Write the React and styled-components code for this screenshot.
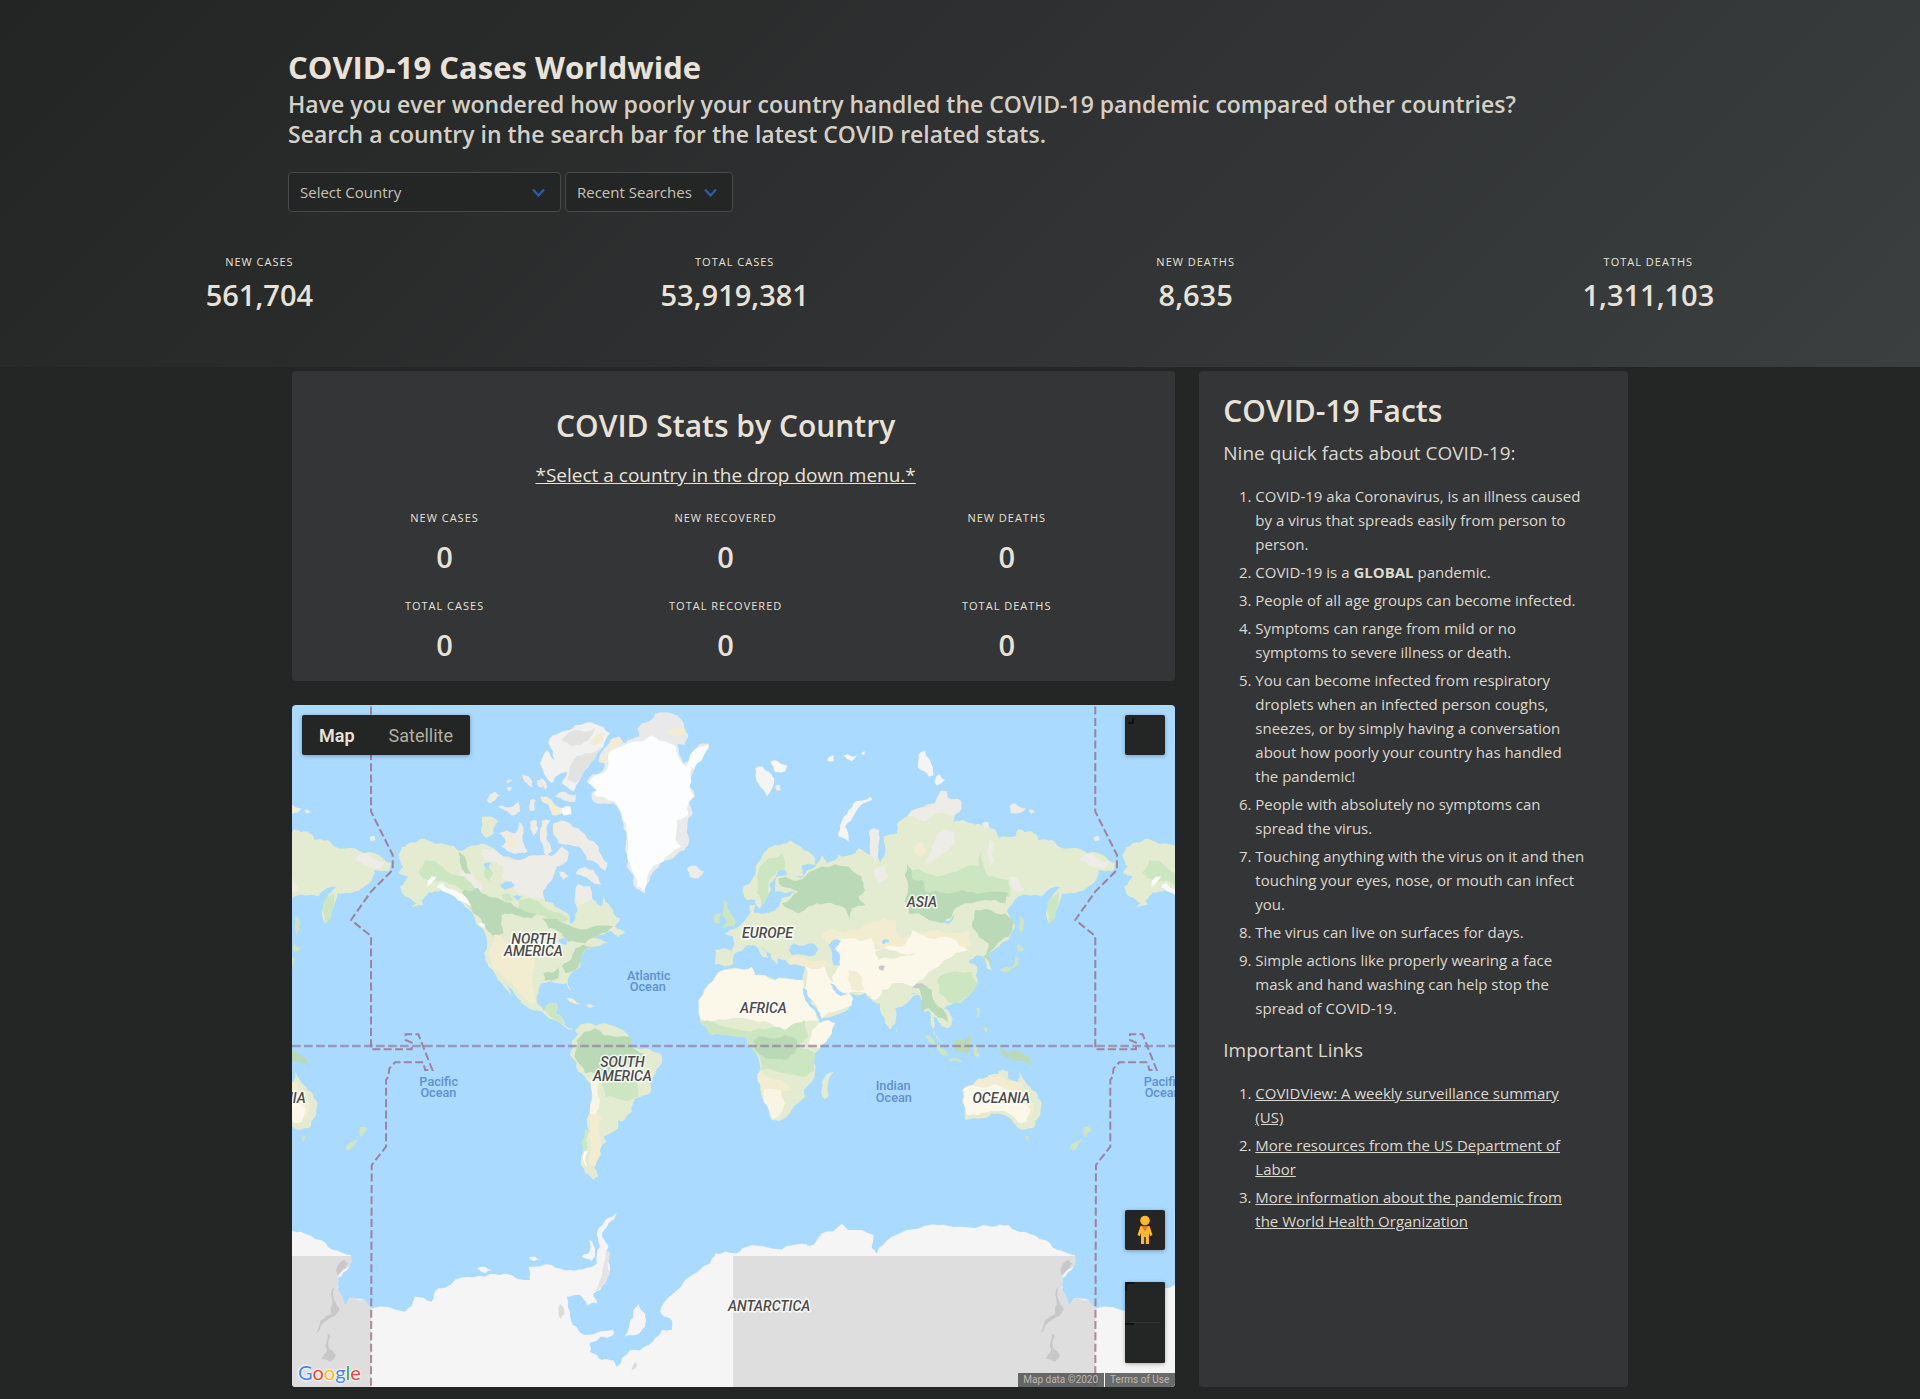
import React from "react";
import styled, { createGlobalStyle } from "styled-components";

const color = {
  page: "#232625",
  panel: "#343537",
  heading: "#e8e2d8",
  text: "#ddd8ce",
  muted: "#b6ada0",
  border: "#47494a",
  accent: "#2f5ba5",
  water: "#aadaff",
};

const GlobalStyle = createGlobalStyle`
  *, *::before, *::after { box-sizing: border-box; }
  body {
    margin: 0;
    background: ${color.page};
    color: ${color.heading};
    font-family: "Open Sans", "Noto Sans", sans-serif;
    font-size: 15px;
    line-height: 24px;
  }
  h1, h2, h3, p, ol, dl, dd { margin: 0; padding: 0; }
`;

const Page = styled.div`
  display: flex;
  flex-direction: column;
  min-height: 100vh;
`;

/* ---------- header ---------- */

const Header = styled.header`
  padding: 47px 0 53px;
  background: linear-gradient(135deg, #232524 0%, #303233 55%, #3b3f40 100%);
`;

const Intro = styled.div`
  width: 70%;
  margin: 0 auto;
`;

const PageTitle = styled.h1`
  font-size: 31px;
  font-weight: 700;
  line-height: 40px;
`;

const Lead = styled.p`
  margin-top: 2px;
  color: #d5d0c5;
  font-size: 23px;
  font-weight: 600;
  line-height: 30px;
`;

const Filters = styled.form`
  display: flex;
  gap: 4px;
  margin-top: 23px;
`;

const SelectBox = styled.div`
  position: relative;
  width: ${(p) => p.$width}px;
`;

const Select = styled.select`
  width: 100%;
  height: 40px;
  padding: 0 36px 0 11px;
  appearance: none;
  border: 1px solid ${color.border};
  border-radius: 4px;
  background: ${color.page};
  color: #c9c2b6;
  font: inherit;
`;

const Chevron = styled.svg`
  position: absolute;
  top: 14px;
  right: 16px;
  width: 13px;
  height: 13px;
  fill: none;
  stroke: ${color.accent};
  stroke-width: 2.4;
  pointer-events: none;
`;

const WorldStats = styled.dl`
  display: flex;
  justify-content: space-around;
  margin-top: 38px;
  padding: 0 32px;
`;

const StatBox = styled.div`
  display: flex;
  flex-direction: column;
  gap: ${(p) => (p.$spaced ? 8 : 2)}px;
  text-align: center;
`;

const StatLabel = styled.dt`
  font-size: 11px;
  line-height: 24px;
  letter-spacing: 1px;
  text-transform: uppercase;
`;

const StatValue = styled.dd`
  font-size: 29px;
  font-weight: 600;
  line-height: 38px;
`;

/* ---------- body ---------- */

const Main = styled.main`
  flex: 1;
  display: grid;
  grid-template-columns: minmax(0, 68fr) minmax(0, 33fr);
  gap: 24px;
  width: 70%;
  margin: 0 auto;
  padding: 4px 4px 12px;
`;

const Column = styled.div`
  display: flex;
  flex-direction: column;
  gap: 24px;
`;

const CountryPanel = styled.section`
  padding: 35px 28px 17px 12px;
  border-radius: 4px;
  background: ${color.panel};
  text-align: center;
`;

const PanelTitle = styled.h2`
  font-size: 30px;
  font-weight: 600;
  line-height: 40px;
`;

const Hint = styled.p`
  margin-top: 13px;
  font-size: 19px;
  line-height: 32px;
  text-decoration: underline;
`;

const CountryStats = styled.dl`
  display: grid;
  grid-template-columns: repeat(3, 1fr);
  row-gap: 18px;
  margin-top: 15px;
`;

const FactsPanel = styled.aside`
  padding: 20px 40px 24px 24px;
  border-radius: 4px;
  background: ${color.panel};
`;

const SubTitle = styled.h3`
  margin-top: ${(p) => p.$top}px;
  color: ${color.text};
  font-size: 19px;
  font-weight: 400;
  line-height: 32px;
`;

const List = styled.ol`
  margin-top: 15px;
  padding-left: 32px;
  color: ${color.text};
`;

const Item = styled.li`
  & + & { margin-top: 4px; }
`;

const Link = styled.a`
  color: inherit;
`;

/* ---------- map ---------- */

const MapPanel = styled.section`
  position: relative;
  flex: 1;
  min-height: 480px;
  overflow: hidden;
  border-radius: 4px;
  background: ${color.water};
  font-family: Roboto, sans-serif;
`;

const MapCanvas = styled.svg`
  position: absolute;
  inset: 0;
  width: 100%;
  height: 100%;
`;

const LandLabel = styled.text`
  fill: #4a4a48;
  stroke: rgba(255, 255, 255, 0.85);
  stroke-width: 9;
  stroke-linejoin: round;
  paint-order: stroke;
  font-size: 42px;
  font-style: italic;
  font-weight: 500;
  text-anchor: middle;
`;

const SeaLabel = styled.text`
  fill: #5f90d4;
  font-size: 38px;
  font-weight: 500;
  text-anchor: middle;
`;

const MapTypes = styled.div`
  position: absolute;
  top: 10px;
  left: 10px;
  display: flex;
  border-radius: 2px;
  background: ${color.page};
  box-shadow: 0 1px 4px rgba(0, 0, 0, 0.3);
`;

const MapTypeButton = styled.button`
  height: 40px;
  padding: 0 17px;
  border: 0;
  background: transparent;
  color: ${(p) => (p.$active ? color.heading : color.muted)};
  font-family: inherit;
  font-size: 18px;
  font-weight: ${(p) => (p.$active ? 600 : 400)};
`;

const MapControls = styled.div`
  position: absolute;
  top: 10px;
  right: 10px;
  bottom: 24px;
  display: flex;
  flex-direction: column;
  align-items: flex-end;
`;

const ControlButton = styled.button`
  display: grid;
  place-items: center;
  width: 40px;
  height: 40px;
  margin-top: ${(p) => (p.$push ? "auto" : 0)};
  padding: 0;
  border: 0;
  border-radius: 2px;
  background: ${color.page};
  box-shadow: ${(p) => (p.$flat ? "none" : "0 1px 4px rgba(0, 0, 0, 0.3)")};
`;

const CornerMark = styled.svg`
  place-self: start;
  width: 10px;
  height: 10px;
  fill: none;
  stroke: #0f1010;
  stroke-width: 2;
`;

const ZoomGroup = styled.div`
  margin-top: 32px;
  border-radius: 2px;
  background: ${color.page};
  box-shadow: 0 1px 4px rgba(0, 0, 0, 0.3);
`;

const Divider = styled.div`
  height: 1px;
  margin: 0 5px;
  background: #343637;
`;

const Logo = styled.a`
  position: absolute;
  left: 6px;
  bottom: 2px;
  font-family: Lato, sans-serif;
  font-size: 20px;
  line-height: 26px;
  text-decoration: none;
  text-shadow: 0 0 2px #fff, 0 0 2px #fff, 0 0 3px #fff;
`;

const LogoLetter = styled.span`
  color: ${(p) => p.$color};
`;

const Credits = styled.div`
  position: absolute;
  right: 0;
  bottom: 0;
  display: flex;
  gap: 1px;
  font-size: 10px;
  line-height: 14px;
`;

const Credit = styled.span`
  padding: 0 6px 0 5px;
  background: rgba(70, 71, 72, 0.8);
  color: #c0b8ab;
  a { color: inherit; text-decoration: none; }
`;

/* Midpoint displacement turns a coarse outline into a natural coast. */
function coast(points, dx = 0, dy = 0, amount = 0.16) {
  let seed = 7;
  const rand = () => {
    seed = (seed * 16807) % 2147483647;
    return seed / 2147483647 - 0.5;
  };
  let pts = points.trim().split(/\s+/).map((p) => {
    const [x, y] = p.split(",").map(Number);
    return [x + dx, y + dy];
  });
  for (let pass = 0; pass < 2; pass += 1) {
    const next = [];
    pts.forEach((a, i) => {
      const b = pts[(i + 1) % pts.length];
      const len = Math.hypot(b[0] - a[0], b[1] - a[1]);
      next.push(a);
      if (len > 9 && len < 200) {
        const k = Math.max(-9, Math.min(9, rand() * 2 * amount * len)) / len;
        next.push([
          (a[0] + b[0]) / 2 - (b[1] - a[1]) * k,
          (a[1] + b[1]) / 2 + (b[0] - a[0]) * k,
        ]);
      }
    });
    pts = next;
  }
  return "M" + pts.map((p) => p.map((n) => n.toFixed(1)).join(" ")).join("L") + "Z";
}

const E = 1320;
const S = 1020;

/* [fill, outline, x shift, y shift] */
const shapes = [
  // North America
  ["#e3ecd0", "340,465 370,430 405,417 450,432 520,452 560,437 600,432 655,470 720,475 775,465 800,468 830,440 850,455 845,485 815,500 800,540 775,570 780,605 820,625 848,640 858,672 870,650 875,620 872,570 880,552 915,560 922,598 950,620 955,585 975,620 1005,655 990,680 1020,700 1000,712 975,692 940,705 930,715 970,728 920,740 890,765 885,800 850,832 858,875 845,850 800,845 765,855 755,905 775,932 800,908 815,910 812,940 830,950 838,975 865,990 850,990 820,965 770,935 730,925 705,900 680,868 655,840 678,888 650,850 610,800 597,760 600,700 570,660 540,620 500,585 470,570 430,578 410,600 415,615 370,635 395,610 360,590 345,560 370,530 340,520 355,500"],
  ["#edece6", "590,445 655,470 720,475 775,465 800,468 830,440 850,455 845,485 815,500 800,540 775,570 778,600 740,595 700,580 680,550 650,530 655,500 600,480"],
  ["#edece6", "872,570 880,552 915,560 922,598 905,605 875,625"],
  ["#edece6", "520,520 560,515 590,550 590,575 545,550"],
  ["#b9d9b7", "530,575 580,565 610,590 650,600 700,625 760,640 740,655 690,645 650,645 655,700 630,715 605,690 590,665 565,640"],
  ["#cbe6c0", "700,600 760,605 830,640 850,660 820,665 780,650 740,640 700,625"],
  ["#b9d9b7", "770,655 850,675 920,682 985,680 940,705 900,730 850,725 830,700 790,685"],
  ["#cbe6c0", "420,480 470,500 540,530 570,570 530,570 480,545 430,545 400,520"],
  ["#b9d9b7", "520,455 545,490 560,520 540,520 525,490"],
  ["#b9d9b7", "870,745 920,740 890,765 880,800 840,820 830,800 860,775"],
  ["#b9d9b7", "775,820 800,818 820,800 820,835 780,842"],
  ["#f2ecd1", "625,705 655,715 670,735 740,760 750,800 740,850 755,905 735,912 700,880 680,850 655,830 625,800 610,760"],
  ["#cbe6c0", "775,930 800,908 815,910 812,940 830,950 838,975 820,965 790,945"],
  ["#f8fafc", "455,562 470,548 500,568 530,582 560,625 530,605 490,580"],
  ["#f8fafc", "425,560 440,530 455,528 440,550"],
  ["#f8fafc", "580,672 600,672 600,684"],
  ["#cbe6c0", "600,500 625,520 615,545 598,530"],
  ["#cbe6c0", "650,585 672,582 690,600 660,604"],
  ["#aadaff", "645,555 680,545 690,555 660,570"],
  ["#aadaff", "595,495 620,488 610,510"],
  ["#aadaff", "685,590 712,590 700,603"],
  ["#aadaff", "820,718 850,718 845,735 825,730"],
  // Arctic islands
  ["#f1f1f0", "790,130 830,95 870,75 930,72 975,100 955,140 925,175 900,210 885,240 865,275 830,250 845,215 820,225 800,250 765,190 785,150 810,180"],
  ["#e2e2e1", "830,120 880,90 930,85 910,120 860,140"],
  ["#e2e2e1", "860,190 900,160 950,140 900,210 870,250 845,240"],
  ["#f1ecd2", "915,125 960,98 955,120 925,138"],
  ["#edece6", "605,300 630,275 645,285 615,310"],
  ["#edece6", "640,320 665,322 700,305 705,335 680,347 660,332"],
  ["#edece6", "735,300 752,300 750,330 735,333"],
  ["#f2ecd1", "765,290 800,300 830,325 855,320 858,345 800,345 790,315 770,305"],
  ["#e3ecd0", "590,350 640,365 625,400 605,414 588,398"],
  ["#edece6", "640,400 690,400 700,365 712,375 712,410 728,455 690,462 645,440 665,425"],
  ["#f2ecd1", "660,418 690,412 692,440 670,440"],
  ["#edece6", "735,365 755,362 760,385 745,408"],
  ["#edece6", "770,362 797,362 785,390 785,420 800,455 785,470 765,420"],
  ["#edece6", "805,370 850,368 880,385 905,415 940,440 967,490 960,515 935,490 905,480 880,440 820,430 805,400"],
  ["#f2ecd1", "806,372 825,368 820,412 806,405"],
  ["#edece6", "872,520 900,500 925,510 948,555 920,545 895,530"],
  ["#edece6", "820,515 852,530 835,540"],
  ["#edece6", "712,222 742,245 742,262 718,245"],
  ["#edece6", "755,240 768,245 775,262 760,260"],
  ["#edece6", "663,245 682,240 670,250"],
  ["#edece6", "665,265 682,262 675,275"],
  ["#edece6", "810,290 840,275 872,285 870,305 840,303"],
  ["#fafbfc", "830,325 855,320 860,340 835,347"],
  ["#edece6", "255,415 268,410 270,420 258,424"],
  ["#edece6", "765,235 788,260 782,272"],
  // Greenland
  ["#e8e9e8", "1057,85 1090,65 1110,42 1160,40 1190,60 1210,105 1200,135 1130,130 1060,125"],
  ["#f1ecd2", "1140,95 1200,85 1207,106 1160,105"],
  ["#e9eaea", "905,245 950,215 958,190 940,185 975,125 1000,110 1020,130 1060,110 1100,105 1140,115 1175,130 1195,190 1225,175 1240,135 1270,130 1272,145 1230,205 1213,260 1230,290 1212,310 1224,340 1207,370 1212,420 1198,450 1150,480 1110,510 1095,530 1080,580 1050,565 1025,500 1020,440 1025,410 1010,360 985,310 925,305 920,280 935,270"],
  ["#f2ecd1", "940,180 958,170 975,120 1000,110 1010,130 980,150 975,190"],
  ["#fcfdff", "910,250 955,220 970,160 1010,140 1060,125 1100,105 1130,125 1172,140 1190,190 1220,205 1213,260 1225,290 1210,310 1208,345 1175,360 1170,420 1190,440 1150,465 1110,495 1090,520 1078,575 1055,560 1040,510 1030,440 1025,400 1010,350 985,303 935,290 925,280 935,270"],
  ["#fcfdff", "1205,200 1240,140 1268,134 1265,148 1225,205"],
  ["#edece6", "1205,505 1235,498 1257,515 1240,535 1215,532"],
  // South America
  ["#e3ecd0", "870,990 905,970 960,970 1030,1005 1040,1040 1080,1045 1130,1065 1130,1090 1105,1130 1095,1180 1050,1195 1040,1235 1010,1265 998,1262 998,1285 955,1310 965,1325 940,1350 948,1365 928,1395 940,1430 925,1440 900,1420 888,1370 900,1320 905,1260 915,1220 918,1150 880,1115 855,1065 862,1020 880,1005"],
  ["#b9d9b7", "875,1020 930,985 990,1010 1036,1010 1040,1040 1075,1060 1060,1090 1010,1095 960,1130 900,1120 868,1070"],
  ["#cbe6c0", "950,1140 1000,1120 1050,1130 1060,1190 1010,1200 960,1190"],
  ["#f9f5e5", "916,1140 942,1150 945,1200 930,1250 915,1240"],
  ["#f2ecd1", "918,1245 950,1250 950,1330 930,1400 910,1390 912,1310"],
  ["#fdfdfd", "897,1355 907,1355 905,1400 896,1385"],
  ["#cbe6c0", "900,1290 914,1290 908,1345 895,1355"],
  // Caribbean
  ["#f2ecd1", "843,895 865,898 888,912 870,912"],
  ["#e3ecd0", "902,915 930,920 915,925"],
  // Africa
  ["#e3ecd0", "1290,830 1350,805 1400,800 1408,825 1470,840 1480,833 1555,840 1560,870 1590,925 1610,965 1650,970 1640,1000 1600,1050 1585,1070 1588,1130 1555,1170 1560,1190 1500,1255 1460,1260 1435,1205 1417,1135 1425,1100 1405,1050 1380,1010 1320,1005 1280,1005 1245,965 1240,900 1265,860"],
  ["#fbf7e9", "1290,830 1350,805 1400,800 1408,825 1470,840 1480,833 1555,840 1560,870 1590,925 1600,960 1540,965 1500,990 1420,965 1320,960 1245,955 1240,900 1265,860"],
  ["#cbe6c0", "1245,968 1320,980 1420,985 1500,990 1560,960 1570,1010 1540,1040 1590,1060 1590,1110 1560,1130 1500,1120 1430,1110 1425,1080 1405,1050 1380,1010 1320,1005 1280,1005"],
  ["#b9d9b7", "1405,1020 1440,1010 1500,1005 1535,1020 1530,1060 1500,1080 1440,1075 1410,1050"],
  ["#f9f5e5", "1435,1170 1490,1170 1500,1210 1480,1250 1460,1255 1435,1205"],
  ["#f2ecd1", "1417,1135 1425,1110 1490,1140 1520,1170 1490,1170 1430,1170"],
  ["#fbf7e9", "1610,965 1650,970 1640,1000 1600,1045 1570,1030 1580,990"],
  ["#e3ecd0", "1610,1145 1645,1115 1630,1185 1618,1198 1607,1178"],
  // Europe and Asia
  ["#e3ecd0", "1290,750 1340,755 1345,710 1320,700 1350,685 1380,660 1395,640 1395,615 1410,615 1408,640 1440,640 1475,625 1490,595 1530,575 1470,575 1475,530 1510,520 1550,535 1590,500 1610,465 1625,490 1660,465 1710,460 1720,445 1755,465 1750,400 1765,385 1782,390 1780,440 1785,490 1800,440 1795,410 1835,400 1835,375 1865,350 1900,325 1950,310 1965,275 1985,275 1990,295 2025,300 2030,325 2005,365 2060,370 2095,380 2130,390 2140,415 2190,410 2200,388 2240,395 2260,420 2300,420 2320,440 2380,445 2440,460 2490,490 2480,515 2440,510 2425,550 2380,575 2330,580 2325,600 2310,650 2292,672 2285,630 2300,590 2325,562 2290,570 2270,590 2200,590 2165,632 2190,680 2170,720 2140,740 2110,760 2120,810 2105,805 2095,770 2075,765 2050,785 2075,800 2078,850 2050,890 1995,915 1975,925 2000,950 2000,975 1985,985 1960,965 1945,950 1945,1000 1975,1030 1960,1020 1940,980 1930,930 1915,935 1905,890 1880,880 1830,925 1830,970 1815,987 1800,970 1785,910 1765,905 1740,878 1690,880 1703,895 1700,915 1610,955 1600,945 1560,870 1555,860 1560,800 1515,795 1500,780 1480,775 1478,795 1455,760 1425,740 1450,775 1435,772 1405,735 1380,740 1350,760 1345,790 1320,800 1290,795"],
  ["#e3ecd0", "1377,590 1375,560 1400,540 1435,460 1470,435 1515,422 1545,440 1590,475 1590,495 1550,495 1555,530 1510,535 1500,510 1480,510 1455,550 1455,575 1435,610 1425,628 1410,600 1385,600"],
  ["#cbe6c0", "1415,530 1450,475 1490,460 1500,505 1475,515 1450,550 1450,590 1430,615 1415,580"],
  ["#b9d9b7", "1478,535 1520,540 1560,530 1610,500 1690,500 1730,530 1740,570 1720,590 1740,615 1700,625 1690,660 1680,625 1620,610 1570,620 1540,640 1490,610 1540,575 1490,560"],
  ["#edece6", "1865,350 1900,325 1950,310 1965,275 1985,275 1990,295 2025,300 2030,325 2005,350 1960,340 1920,365"],
  ["#edece6", "1752,395 1765,385 1782,390 1778,440 1770,490 1755,460"],
  ["#edece6", "1960,400 2010,395 2010,430 1960,470 1920,490 1940,440"],
  ["#f2ecd1", "1890,435 1915,430 1925,455 1905,470 1888,460"],
  ["#edece6", "2380,480 2420,460 2470,485 2460,505 2420,500"],
  ["#edece6", "2170,530 2200,540 2220,570 2190,575"],
  ["#edece6", "2112,420 2128,430 2125,480 2115,500"],
  ["#edece6", "1765,510 1800,500 1810,530 1780,550"],
  ["#cbe6c0", "1870,510 1920,520 1990,520 2080,500 2090,450 2110,530 2170,540 2175,590 2120,600 2020,600 1920,580 1870,560"],
  ["#b9d9b7", "1865,490 1880,535 1910,540 1920,575 1980,580 2030,570 2090,580 2170,580 2160,610 2100,600 2050,610 2010,625 2000,650 1970,670 1900,640 1870,640 1860,600 1870,560"],
  ["#b9d9b7", "2070,630 2130,640 2160,640 2185,670 2170,710 2130,740 2110,760 2120,800 2095,770 2110,730 2080,710 2060,680"],
  ["#f2ecd1", "1610,710 1640,685 1720,690 1760,665 1830,660 1840,710 1900,700 1960,690 2050,690 2060,740 1980,770 1900,760 1800,750 1640,740"],
  ["#fbf7e9", "1650,730 1690,715 1760,715 1770,750 1850,740 1880,690 1930,715 2000,715 2050,750 1980,780 1960,800 1920,830 1880,860 1820,850 1800,875 1765,900 1740,878 1690,880 1640,830 1660,800"],
  ["#e3ecd0", "1770,755 1830,752 1900,758 1860,768 1800,772 1780,780"],
  ["#c9c9c4", "1780,800 1800,798 1795,812 1782,808"],
  ["#c9c9c4", "1880,862 1910,850 1930,858 1905,864"],
  ["#f2ecd1", "1690,810 1730,830 1740,870 1700,870"],
  ["#fbf7e9", "1560,800 1620,800 1650,850 1690,880 1703,895 1700,915 1610,955 1600,945 1560,870"],
  ["#f2ecd1", "1510,780 1550,770 1620,780 1640,800 1560,800 1515,795"],
  ["#cbe6c0", "1960,830 2060,815 2078,850 2050,890 1995,910 1960,880"],
  ["#b9d9b7", "1900,860 1940,870 1960,920 1975,930 1990,970 1950,945 1930,925 1910,930"],
  ["#e3ecd0", "1790,870 1850,870 1900,880 1830,925 1830,970 1815,987 1800,970 1785,910"],
  ["#cbe6c0", "2285,630 2300,590 2320,575 2310,650 2292,672"],
  ["#aadaff", "1512,750 1525,730 1560,735 1580,730 1600,750 1590,765 1520,765"],
  ["#aadaff", "1630,735 1655,717 1668,722 1650,745 1665,770 1665,797 1645,795 1640,765"],
  ["#aadaff", "1552,865 1565,870 1590,920 1612,960 1605,970 1575,920 1560,900"],
  ["#aadaff", "1635,850 1655,865 1690,880 1665,888 1645,870"],
  ["#aadaff", "1789,725 1810,718 1812,726 1795,733"],
  ["#aadaff", "1965,668 1990,665 2003,640 2005,655 1990,672"],
  ["#cbe6c0", "1315,600 1327,612 1333,635 1352,665 1345,680 1310,685 1325,665 1312,640"],
  ["#cbe6c0", "1288,645 1308,640 1305,670 1288,670"],
  ["#f4f4f2", "1410,205 1432,200 1450,215 1467,235 1445,290 1430,265 1415,245"],
  ["#f8f8f7", "1455,185 1480,185 1505,195 1500,215 1470,217"],
  ["#edece6", "1470,260 1485,255 1488,270 1475,272"],
  ["#f4f4f2", "1755,290 1760,300 1710,340 1680,380 1690,425 1660,410 1665,375 1690,330 1710,305"],
  ["#f4f4f2", "1900,165 1920,152 1935,180 1945,225 1930,230 1898,202"],
  ["#f4f4f2", "1948,245 1962,222 1980,240 1955,257"],
  ["#f8f8f7", "1625,182 1648,165 1645,185"],
  ["#f8f8f7", "1675,165 1700,170 1715,165 1700,185"],
  ["#f8f8f7", "1728,160 1740,155 1738,167"],
  ["#edece6", "2172,320 2190,310 2222,325 2210,337 2175,340"],
  ["#edece6", "2230,330 2252,338 2238,342"],
  ["#edece6", "2425,415 2440,408 2444,418 2430,422"],
  ["#edece6", "2090,370 2110,368 2115,385 2098,382"],
  ["#cbe6c0", "2145,812 2180,800 2190,768 2200,775 2195,800 2165,817"],
  ["#cbe6c0", "2195,740 2203,732 2220,745 2200,757"],
  ["#cbe6c0", "2203,650 2208,650 2215,690 2205,710"],
  ["#cbe6c0", "2073,925 2080,922 2080,950 2073,950"],
  ["#cbe6c0", "2092,983 2108,985 2106,1000"],
  ["#cbe6c0", "1830,985 1838,992 1833,998"],
  ["#cbe6c0", "1920,1005 1945,1020 1980,1050 1990,1068 1970,1065 1930,1025"],
  ["#b9d9b7", "2005,1025 2035,1020 2055,1002 2058,1035 2045,1060 2010,1055"],
  ["#cbe6c0", "1990,1078 2030,1083 2025,1087 1995,1085"],
  ["#cbe6c0", "2063,1045 2080,1040 2075,1055 2085,1070 2065,1066"],
  ["#b9d9b7", "2140,1042 2165,1055 2190,1050 2225,1068 2243,1098 2200,1083 2160,1072"],
  // Australia and New Zealand
  ["#e3ecd0", "712,150 760,135 790,105 815,102 830,88 850,95 848,118 875,130 885,90 900,125 930,155 950,190 945,225 925,265 880,265 860,240 835,225 800,220 770,235 720,240 718,215 710,180", E, S],
  ["#f2ecd1", "735,140 790,108 825,105 850,125 890,130 900,170 925,190 920,230 870,230 800,215 730,215", E, S],
  ["#fbf7e9", "712,150 760,140 800,135 850,150 895,175 915,210 905,245 880,250 850,220 800,212 760,225 725,225 715,190", E, S],
  ["#cbe6c0", "900,290 915,290 908,305", E, S],
  ["#cbe6c0", "1077,260 1100,268 1085,290 1075,288", E, S],
  ["#cbe6c0", "1033,328 1050,305 1072,290 1060,315 1045,332", E, S],
  // Antarctica
  ["#f5f5f5", "258,805 360,815 390,770 440,785 460,745 530,712 600,710 660,700 735,720 730,680 800,675 855,690 905,682 935,670 945,620 938,570 960,540 995,517 970,550 950,590 970,620 975,690 960,730 925,760 935,790 905,795 885,765 845,770 855,830 880,870 905,885 985,870 985,885 915,908 915,935 950,960 985,960 995,980 1035,930 1090,915 1130,870 1160,870 1155,835 1125,815 1135,790 1200,720 1275,670 1290,640 1350,640 1370,625 1490,628 1550,610 1575,618 1610,580 1670,552 1690,570 1765,585 1760,625 1775,640 1820,590 1880,568 1960,555 2020,560 2120,560 2170,555 2220,575 2280,600 2330,632 2370,645 2365,680 2330,715 2330,750 2350,795 2365,775 2410,780 2430,805 2430,1060 258,1060", 0, S],
  ["#f5f5f5", "1045,830 1060,790 1080,820 1080,860 1050,885 1018,890", 0, S],
  ["#f5f5f5", "890,650 910,640 912,600 922,605 930,650 920,662", 0, S],
  ["#f5f5f5", "575,685 620,690 600,700", 0, S],
  ["#f5f5f5", "730,653 768,660 745,663", 0, S],
  ["#dedede", "1344,648 2371,648 2365,680 2330,715 2330,750 2350,795 2365,775 2410,780 2430,805 2430,1060 1344,1060", 0, S],
  ["#c8c8c8", "2325,690 2350,660 2362,670 2340,695 2328,705", 0, S],
  ["#c8c8c8", "2310,760 2320,740 2325,790 2335,810 2300,840 2265,880 2280,840 2310,820", 0, S],
  ["#c8c8c8", "2300,880 2308,890 2305,925 2325,945 2310,965 2280,955 2298,930", 0, S],
  ["#e4e4e4", "962,630 975,640 975,700 950,740 925,755 950,710", 0, S],
  ["#dcdcdc", "825,790 838,820 828,840 820,820", 0, S],
  ["#dcdcdc", "1050,965 1055,980 1038,1000", 0, S],
].map(([fill, points, dx, dy]) => ({ fill, d: coast(points, dx, dy) }));

const dateline =
  "M258 20V335L323 465V510L258 575L198 660L258 708V1048H380V1028L362 1020V1003H400L442 1110H420L415 1087H330L313 1105L310 1130L303 1140V1340L260 1395L258 2061";

const landLabels = [
  ["NORTH", 746, 732],
  ["AMERICA", 745, 769],
  ["EUROPE", 1447, 713],
  ["ASIA", 1910, 621],
  ["AFRICA", 1435, 938],
  ["SOUTH", 1012, 1100],
  ["AMERICA", 1012, 1143],
  ["OCEANIA", 2148, 1209],
  ["OCEANIA", -24, 1209],
  ["ANTARCTICA", 1452, 1834],
];

const seaLabels = [
  ["Atlantic", 1091, 840],
  ["Ocean", 1088, 874],
  ["Pacific", 461, 1159],
  ["Ocean", 460, 1192],
  ["Indian", 1824, 1171],
  ["Ocean", 1826, 1205],
  ["Pacific", 2633, 1159],
  ["Ocean", 2632, 1192],
];

const WORLD_WIDTH = 2172;

function WorldMap() {
  return (
    <MapCanvas
      viewBox="21 15 2649 2046"
      preserveAspectRatio="xMidYMid slice"
      role="img"
      aria-label="World map"
    >
      <defs>
        <g id="world">
          {shapes.map((s, i) => (
            <path key={i} d={s.d} fill={s.fill} />
          ))}
        </g>
        <path
          id="dateline"
          d={dateline}
          fill="none"
          stroke="#96687c"
          strokeOpacity="0.75"
          strokeWidth="6"
          strokeDasharray="24 10"
        />
      </defs>
      {[-WORLD_WIDTH, 0, WORLD_WIDTH].map((x) => (
        <use key={x} href="#world" x={x} />
      ))}
      <use href="#dateline" />
      <use href="#dateline" x={WORLD_WIDTH} />
      <path d="M21 1038H2670" stroke="#96829f" strokeOpacity="0.75" strokeWidth="7" strokeDasharray="26 10" />
      {landLabels.map(([t, x, y]) => (
        <LandLabel key={`${t}${x}`} x={x} y={y}>{t}</LandLabel>
      ))}
      {seaLabels.map(([t, x, y]) => (
        <SeaLabel key={`${t}${x}`} x={x} y={y}>{t}</SeaLabel>
      ))}
    </MapCanvas>
  );
}

function Pegman() {
  return (
    <svg width="16" height="30" viewBox="0 0 16 30" aria-hidden="true">
      <circle cx="8" cy="5.5" r="4.8" fill="#fdb92c" />
      <path d="M3.5 11h9l3 9-2.2 1.3L12 18v11H8.8v-7H7.2v7H4V18l-1.3 3.3L.5 20z" fill="#fdb92c" />
      <path d="M4.5 11h7L8 16.5z" fill="#e07c24" />
    </svg>
  );
}

function SelectField({ name, label, width }) {
  return (
    <SelectBox $width={width}>
      <Select name={name} aria-label={label} defaultValue="">
        <option value="">{label}</option>
      </Select>
      <Chevron viewBox="0 0 13 13" aria-hidden="true">
        <path d="M1 3.5l5.5 6 5.5-6" />
      </Chevron>
    </SelectBox>
  );
}

function Stat({ label, value, spaced }) {
  return (
    <StatBox $spaced={spaced}>
      <StatLabel>{label}</StatLabel>
      <StatValue>{value}</StatValue>
    </StatBox>
  );
}

const worldStats = [
  ["New Cases", "561,704"],
  ["Total Cases", "53,919,381"],
  ["New Deaths", "8,635"],
  ["Total Deaths", "1,311,103"],
];

const countryStats = [
  "New Cases",
  "New Recovered",
  "New Deaths",
  "Total Cases",
  "Total Recovered",
  "Total Deaths",
];

const facts = [
  "COVID-19 aka Coronavirus, is an illness caused by a virus that spreads easily from person to person.",
  <>COVID-19 is a <strong>GLOBAL</strong> pandemic.</>,
  "People of all age groups can become infected.",
  "Symptoms can range from mild or no symptoms to severe illness or death.",
  "You can become infected from respiratory droplets when an infected person coughs, sneezes, or by simply having a conversation about how poorly your country has handled the pandemic!",
  "People with absolutely no symptoms can spread the virus.",
  "Touching anything with the virus on it and then touching your eyes, nose, or mouth can infect you.",
  "The virus can live on surfaces for days.",
  "Simple actions like properly wearing a face mask and hand washing can help stop the spread of COVID-19.",
];

const links = [
  "COVIDView: A weekly surveillance summary (US)",
  "More resources from the US Department of Labor",
  "More information about the pandemic from the World Health Organization",
];

const logo = [
  ["G", "#4285f4"],
  ["o", "#ea4335"],
  ["o", "#fbbc05"],
  ["g", "#4285f4"],
  ["l", "#34a853"],
  ["e", "#ea4335"],
];

export default function App() {
  return (
    <Page>
      <GlobalStyle />
      <Header>
        <Intro>
          <PageTitle>COVID-19 Cases Worldwide</PageTitle>
          <Lead>
            Have you ever wondered how poorly your country handled the COVID-19 pandemic compared other countries?
            <br />
            Search a country in the search bar for the latest COVID related stats.
          </Lead>
          <Filters>
            <SelectField name="country" label="Select Country" width={273} />
            <SelectField name="recent" label="Recent Searches" width={168} />
          </Filters>
        </Intro>
        <WorldStats>
          {worldStats.map(([label, value]) => (
            <Stat key={label} label={label} value={value} />
          ))}
        </WorldStats>
      </Header>

      <Main>
        <Column>
          <CountryPanel>
            <PanelTitle>COVID Stats by Country</PanelTitle>
            <Hint>*Select a country in the drop down menu.*</Hint>
            <CountryStats>
              {countryStats.map((label) => (
                <Stat key={label} label={label} value="0" spaced />
              ))}
            </CountryStats>
          </CountryPanel>

          <MapPanel>
            <WorldMap />
            <MapTypes>
              <MapTypeButton type="button" $active>Map</MapTypeButton>
              <MapTypeButton type="button">Satellite</MapTypeButton>
            </MapTypes>
            <MapControls>
              <ControlButton type="button" aria-label="Toggle fullscreen view">
                <CornerMark viewBox="0 0 10 10"><path d="M3 8h5V3" /></CornerMark>
              </ControlButton>
              <ControlButton type="button" aria-label="Street View" $push>
                <Pegman />
              </ControlButton>
              <ZoomGroup>
                <ControlButton type="button" aria-label="Zoom in" $flat>
                  <CornerMark viewBox="0 0 10 10"><path d="M1 9V1h8" /></CornerMark>
                </ControlButton>
                <Divider />
                <ControlButton type="button" aria-label="Zoom out" $flat>
                  <CornerMark viewBox="0 0 10 10"><path d="M0 1h9" /></CornerMark>
                </ControlButton>
              </ZoomGroup>
            </MapControls>
            <Logo href="#map" aria-label="Google">
              {logo.map(([letter, c], i) => (
                <LogoLetter key={i} $color={c}>{letter}</LogoLetter>
              ))}
            </Logo>
            <Credits>
              <Credit>Map data ©2020</Credit>
              <Credit><a href="#terms">Terms of Use</a></Credit>
            </Credits>
          </MapPanel>
        </Column>

        <FactsPanel>
          <PanelTitle>COVID-19 Facts</PanelTitle>
          <SubTitle $top={6}>Nine quick facts about COVID-19:</SubTitle>
          <List>
            {facts.map((fact, i) => (
              <Item key={i}>{fact}</Item>
            ))}
          </List>
          <SubTitle $top={14}>Important Links</SubTitle>
          <List>
            {links.map((link) => (
              <Item key={link}><Link href="#links">{link}</Link></Item>
            ))}
          </List>
        </FactsPanel>
      </Main>
    </Page>
  );
}
